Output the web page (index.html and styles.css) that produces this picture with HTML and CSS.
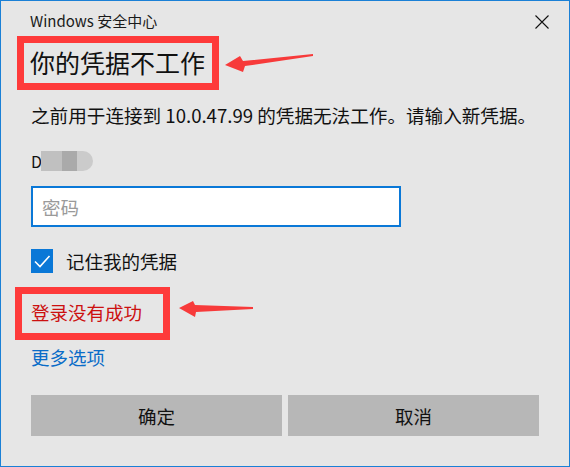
FILE: index.html
```html
<!DOCTYPE html>
<html lang="zh-CN">
<head>
<meta charset="utf-8">
<title>Windows 安全中心</title>
<link rel="stylesheet" href="styles.css">
</head>
<body>
<div class="window">
  <div class="titlebar">
    <span class="title">Windows 安全中心</span>
    <span class="close" aria-label="关闭">
      <svg width="14" height="14" viewBox="0 0 14 14"><path d="M0.5 0.5 L13.5 13.5 M13.5 0.5 L0.5 13.5" stroke="#111" stroke-width="1.1" fill="none"/></svg>
    </span>
  </div>
  <div class="content">
    <div class="heading-row">
      <h1 class="heading">你的凭据不工作</h1>
      <svg class="arrow arrow-1" width="96" height="24" viewBox="0 0 96 24"><polygon points="5,12 20,3 23,8 93,1 93,3 25,13 23,19" fill="#f73a3a"/></svg>
    </div>
    <p class="desc">之前用于连接到 10.0.47.99 的凭据无法工作。请输入新凭据。</p>
    <div class="user">D<span class="mosaic"><span class="m1"></span><span class="m2"></span><span class="m3"></span></span></div>
    <div class="input"><span class="placeholder">密码</span></div>
    <div class="remember">
      <span class="check"><svg width="22" height="22" viewBox="0 0 22 22"><path d="M4 11.5 L9 16.5 L18.5 6" stroke="#fff" stroke-width="1.6" fill="none"/></svg></span>
      <span class="remember-label">记住我的凭据</span>
    </div>
    <div class="error-row">
      <span class="error">登录没有成功</span>
      <svg class="arrow arrow-2" width="84" height="22" viewBox="0 0 84 22"><polygon points="7,10 21,3 23,7 81,9 81,11 24,14 23,19" fill="#f73a3a"/></svg>
    </div>
    <div class="more-row"><a class="more" href="#">更多选项</a></div>
    <div class="buttons">
      <button class="btn">确定</button>
      <button class="btn">取消</button>
    </div>
  </div>
</div>
</body>
</html>
```
FILE: styles.css
```css
* { box-sizing: border-box; }
html, body { margin: 0; padding: 0; background: #e6e6e6; }
body {
  font-family: "Noto Sans CJK SC", "Noto Sans", sans-serif;
  color: #111;
}
.window {
  width: 570px;
  height: 467px;
  border: 1px solid #1a80d6;
  background: #e6e6e6;
  overflow: hidden;
}
.titlebar {
  height: 35px;
  display: flex;
  align-items: flex-start;
  justify-content: space-between;
  padding: 8px 20px 0 29px;
}
.title {
  font-size: 15px;
  line-height: 24px;
  color: #1a1a1a;
}
.close {
  display: block;
  width: 14px;
  height: 14px;
  margin-top: 6px;
}
.close svg { display: block; }
.content {
  padding: 0 30px;
}
.heading-row {
  display: flex;
  align-items: flex-start;
  margin-left: -14px;
  height: 54px;
}
.heading {
  margin: 0;
  border: 7px solid #fe3a3a;
  height: 54px;
  width: 202px;
  padding: 0 0 0 6px;
  font-size: 25px;
  font-weight: normal;
  line-height: 38px;
  color: #111;
  white-space: nowrap;
}
.arrow { display: block; flex: none; }
.arrow-1 { margin-left: 1px; margin-top: 17px; }
.desc {
  margin: 0;
  padding-top: 12px;
  font-size: 18.6px;
  line-height: 26px;
  white-space: nowrap;
}
.user {
  margin-top: 21px;
  height: 24px;
  font-size: 16px;
  line-height: 24px;
  display: flex;
  align-items: center;
}
.mosaic {
  display: flex;
  height: 20px;
  margin-left: -1px;
}
.mosaic span { display: block; height: 20px; }
.m1 { width: 21px; background: #c0c0c0; }
.m2 { width: 15px; background: #aaaaaa; }
.m3 { width: 16px; background: #cbcbcb; border-radius: 0 10px 10px 0; }
.input {
  margin-top: 13px;
  width: 370px;
  height: 41px;
  border: 2px solid #0a78d7;
  background: #fff;
  padding-left: 9px;
  display: flex;
  align-items: center;
}
.placeholder {
  font-size: 18.5px;
  color: #9a9a9a;
}
.remember {
  margin-top: 21px;
  display: flex;
  align-items: center;
  height: 26px;
}
.check {
  width: 22px;
  height: 24px;
  background: #0a78d7;
  display: flex;
  align-items: center;
  justify-content: center;
}
.check svg { display: block; }
.remember-label {
  margin-left: 13px;
  font-size: 18.5px;
  line-height: 26px;
}
.error-row {
  display: flex;
  align-items: flex-start;
  margin-left: -16px;
  margin-top: 13px;
  height: 53px;
}
.error {
  display: block;
  border: 7px solid #fe3a3a;
  width: 155px;
  height: 53px;
  padding-left: 9px;
  font-size: 18.5px;
  line-height: 36px;
  color: #cc1010;
  white-space: nowrap;
}
.arrow-2 { margin-left: 2px; margin-top: 11px; }
.more-row {
  margin-top: 4px;
  height: 26px;
}
.more {
  font-size: 18.5px;
  line-height: 26px;
  color: #0a6cc8;
  text-decoration: none;
}
.buttons {
  margin-top: 25px;
  display: flex;
  gap: 6px;
  width: 508px;
}
.btn {
  flex: 1;
  height: 41px;
  border: none;
  background: #b7b7b7;
  font-family: "Noto Sans CJK SC", "Noto Sans", sans-serif;
  font-size: 18.5px;
  color: #111;
  padding: 0;
}
```
